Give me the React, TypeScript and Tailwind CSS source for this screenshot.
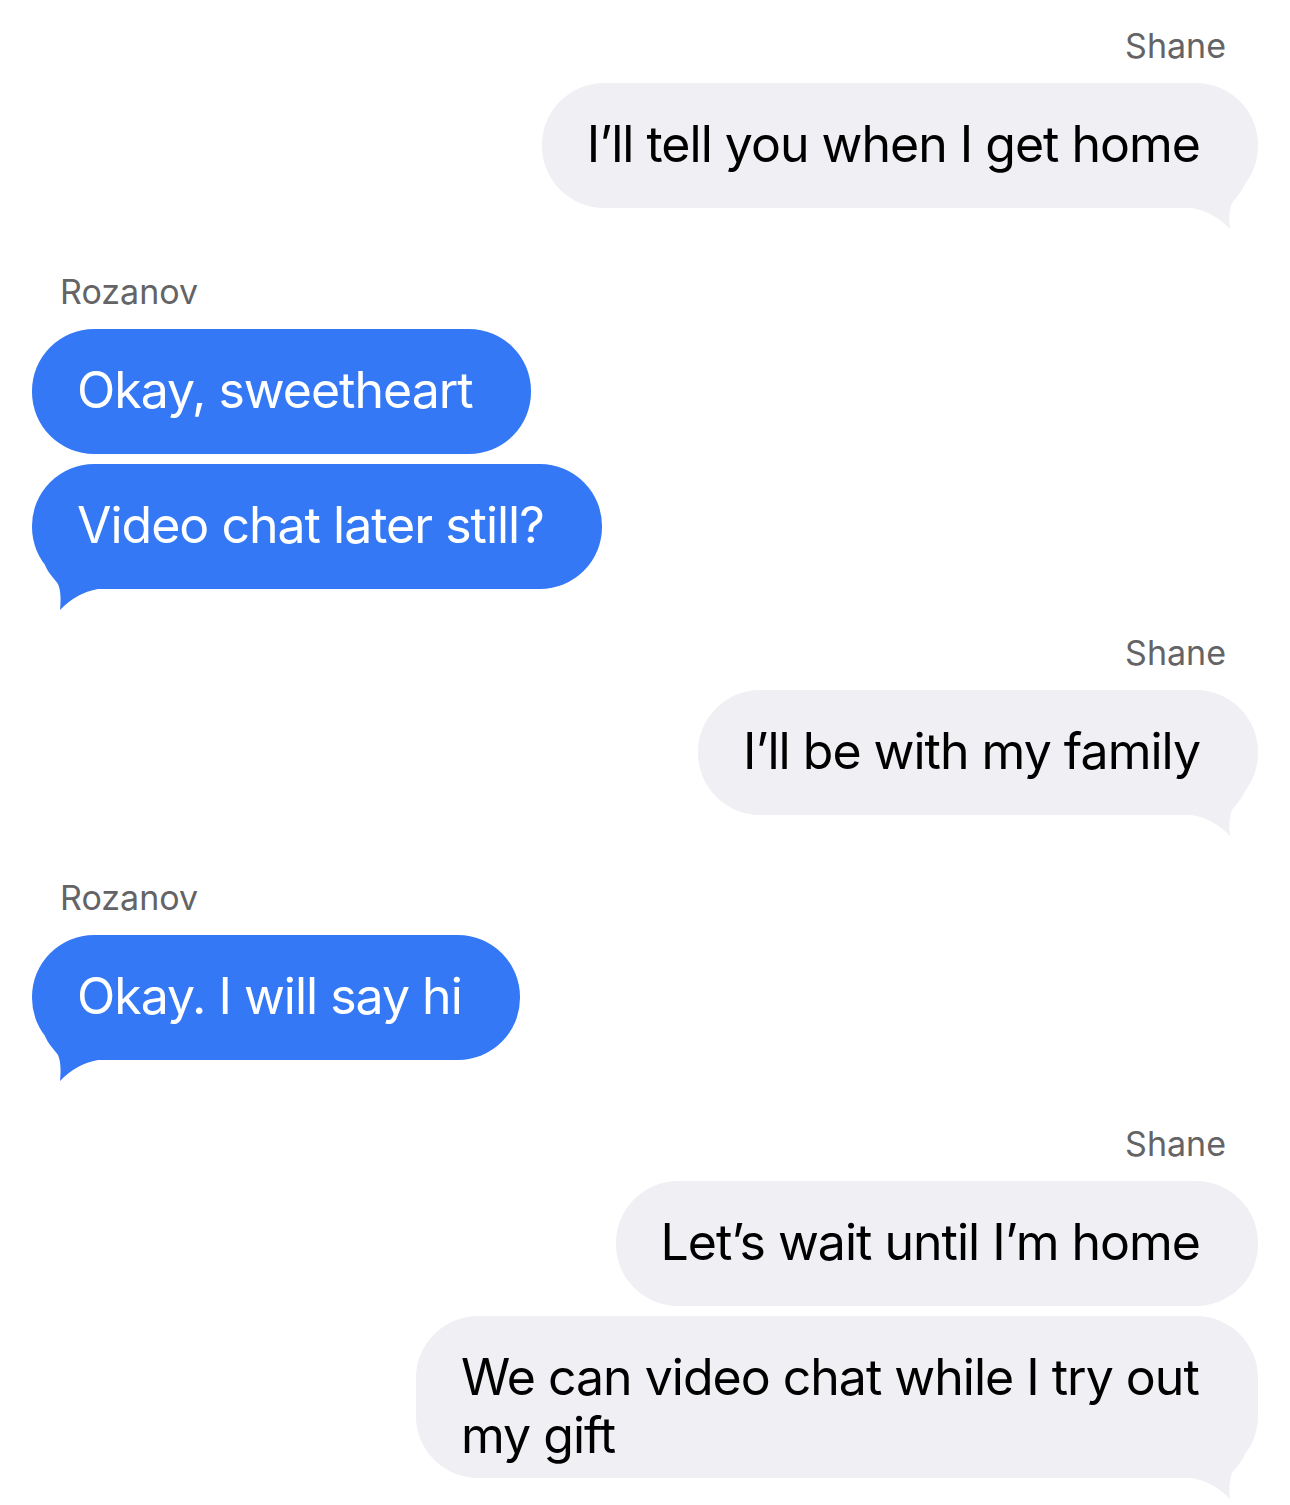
import React from "react";

type Msg = { text: string; pad?: string };
type Group = { from: "me" | "them"; name: string; gap: string; msgs: Msg[] };

const groups: Group[] = [
  { from: "me", name: "Shane", gap: "pt-[25px]", msgs: [{ text: "I\u2019ll tell you when I get home" }] },
  { from: "them", name: "Rozanov", gap: "pt-[63px]", msgs: [{ text: "Okay, sweetheart" }, { text: "Video chat later still?" }] },
  { from: "me", name: "Shane", gap: "pt-[43px]", msgs: [{ text: "I\u2019ll be with my family" }] },
  { from: "them", name: "Rozanov", gap: "pt-[62px]", msgs: [{ text: "Okay. I will say hi" }] },
  {
    from: "me",
    name: "Shane",
    gap: "pt-[63px]",
    msgs: [{ text: "Let\u2019s wait until I\u2019m home" }, { text: "We can video chat while I try out my gift", pad: "pb-[14px]" }],
  },
];

// tail drawn for the right-hand (gray) bubble, mirrored for blue ones
const Tail = ({ color, left }: { color: string; left?: boolean }) => (
  <svg
    width="80"
    height="60"
    viewBox="0 0 80 60"
    className={`absolute bottom-[-22px] ${left ? "left-0 -scale-x-100" : "right-0"}`}
  >
    <path d="M14 38 Q36 42 52 59 C51 50 51 40 54 33 C58 27 64 22 67 14 L18 14 Z" fill={color} />
  </svg>
);

const Bubble = ({ msg, me, tail }: { msg: Msg; me: boolean; tail: boolean }) => (
  <div
    className={`relative max-w-[842px] rounded-[62px] pl-[45px] pr-[58px] pt-[32px] ${msg.pad ?? "pb-[35px]"} text-[50px] leading-[58px] tracking-[-1px] ${
      me ? "bg-[#efeff4] text-black" : "bg-[#3478f6] text-white"
    }`}
  >
    <span className="relative z-10">{msg.text}</span>
    {tail && <Tail color={me ? "#efeff4" : "#3478f6"} left={!me} />}
  </div>
);

export default function App() {
  return (
    <div className="w-[1290px] min-h-[1505px] bg-white font-['Inter','Liberation_Sans',sans-serif] pb-[27px]">
      {groups.map((g, i) => {
        const me = g.from === "me";
        return (
          <div key={i} className={`flex flex-col ${g.gap} ${me ? "items-end pr-[32px]" : "items-start pl-[32px]"}`}>
            <div className={`text-[34px] leading-[41px] text-[#646466] ${me ? "pr-[32px]" : "pl-[28px]"}`}>{g.name}</div>
            <div className={`flex flex-col gap-[10px] mt-[17px] ${me ? "items-end" : "items-start"}`}>
              {g.msgs.map((m, j) => (
                <Bubble key={j} msg={m} me={me} tail={j === g.msgs.length - 1} />
              ))}
            </div>
          </div>
        );
      })}
    </div>
  );
}
